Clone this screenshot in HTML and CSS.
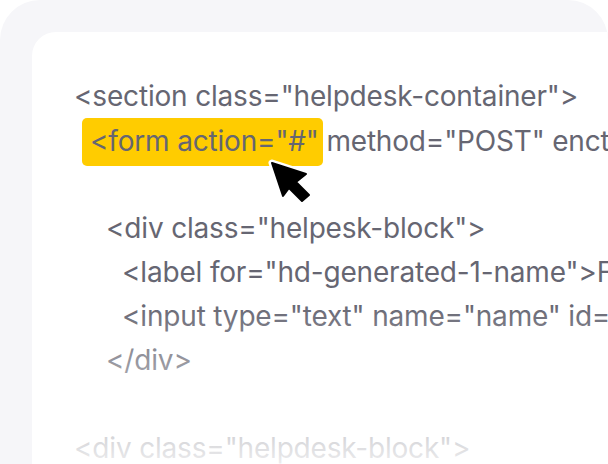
FILE: index.html
```html
<!DOCTYPE html>
<html lang="en">
<head>
<meta charset="utf-8">
<title>Helpdesk form code</title>
<link rel="stylesheet" href="styles.css">
</head>
<body>
<main class="frame">
  <div class="panel">
    <div class="code">
      <div class="line l0">&lt;section class="helpdesk-container"&gt;</div>
      <div class="line l1 form-line"><span class="mark">&lt;form action="#"<svg class="cursor" width="50" height="52" viewBox="0 0 50 52" aria-hidden="true"><path class="cursor-halo" d="M6 7 L40 18 L30 26 L43 39 L36 45 L23 32 L17 40 Z"/><path class="cursor-body" d="M6 7 L40 18 L30 26 L43 39 L36 45 L23 32 L17 40 Z"/></svg></span><span class="after"> method="POST" enctype="multipart/form-data"&gt;</span></div>
      <div class="line blank"></div>
      <div class="line l2">&lt;div class="helpesk-block"&gt;</div>
      <div class="line l3">&lt;label for="hd-generated-1-name"&gt;Full name&lt;/label&gt;</div>
      <div class="line l3">&lt;input type="text" name="name" id="hd-generated-1-name"&gt;</div>
      <div class="line l2">&lt;/div&gt;</div>
      <div class="line blank"></div>
      <div class="line l0">&lt;div class="helpdesk-block"&gt;</div>
    </div>
    <div class="fade"></div>
  </div>
</main>
</body>
</html>
```
FILE: styles.css
```css
html, body {
  margin: 0;
  height: 100%;
  background: #fff;
  overflow: hidden;
}
.frame {
  width: 608px;
  height: 464px;
  box-sizing: border-box;
  padding: 32px 0 0 32px;
  background: #f6f6f9;
  border-radius: 40px 40px 0 0;
  overflow: hidden;
}
.panel {
  position: relative;
  height: 100%;
  background: #fff;
  border-radius: 24px 0 0 0;
  padding-top: 42px;
  padding-left: 42px;
  box-sizing: border-box;
  overflow: hidden;
}
.code {
  font-family: "Inter", sans-serif;
  font-size: 28px;
  letter-spacing: -0.18px;
  line-height: 44px;
  color: #666672;
  white-space: nowrap;
}
.line { height: 44px; }
.l1 { padding-left: 16px; }
.l2 { padding-left: 32px; }
.l3 { padding-left: 48px; }
.form-line { display: flex; align-items: flex-start; padding-left: 8px; }
.mark {
  position: relative;
  flex: none;
  box-sizing: border-box;
  height: 48px;
  padding: 0 4px 0 8px;
  line-height: 46px;
  background: #ffcc00;
  border-radius: 5px;
  z-index: 1;
}
.after { white-space: pre; line-height: 46px; margin-left: -4px; }
.cursor {
  position: absolute;
  left: 184px;
  top: 38px;
}
.cursor-halo {
  fill: #fff;
  stroke: #fff;
  stroke-width: 7;
  stroke-linejoin: round;
}
.cursor-body {
  fill: #000;
  stroke: #000;
  stroke-width: 2;
  stroke-linejoin: round;
}
.fade {
  position: absolute;
  left: 0;
  right: 0;
  top: 270px;
  bottom: 0;
  background: linear-gradient(to bottom, rgba(255,255,255,0), rgba(255,255,255,0.88));
  z-index: 2;
}
```
